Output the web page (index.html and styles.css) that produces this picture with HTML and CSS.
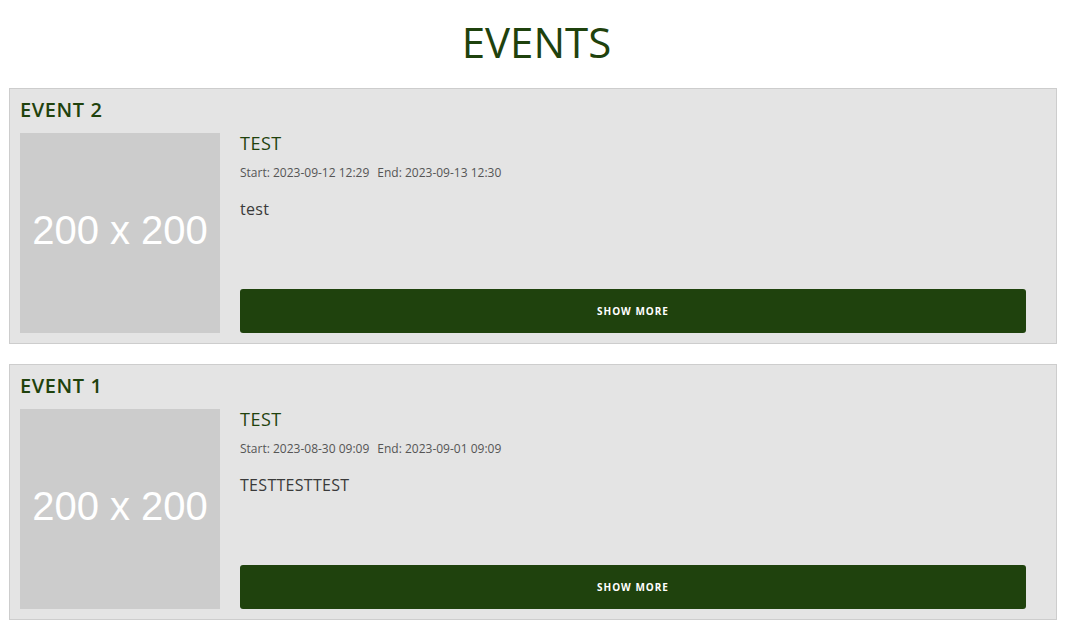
FILE: index.html
```html
<!DOCTYPE html>
<html>
<head>
<meta charset="utf-8">
<link rel="stylesheet" href="styles.css">
</head>
<body>
<h1 class="page-title">EVENTS</h1>
<div class="events">
  <div class="event-card">
    <h2 class="event-name">EVENT 2</h2>
    <div class="event-body">
      <div class="placeholder">200 x 200</div>
      <div class="event-info">
        <h3 class="event-title">TEST</h3>
        <div class="event-dates"><span>Start: 2023-09-12 12:29</span><span>End: 2023-09-13 12:30</span></div>
        <p class="event-desc">test</p>
        <button class="show-more">SHOW MORE</button>
      </div>
    </div>
  </div>
  <div class="event-card">
    <h2 class="event-name">EVENT 1</h2>
    <div class="event-body">
      <div class="placeholder">200 x 200</div>
      <div class="event-info">
        <h3 class="event-title">TEST</h3>
        <div class="event-dates"><span>Start: 2023-08-30 09:09</span><span>End: 2023-09-01 09:09</span></div>
        <p class="event-desc">TESTTESTTEST</p>
        <button class="show-more">SHOW MORE</button>
      </div>
    </div>
  </div>
</div>
</body>
</html>
```
FILE: styles.css
```css
body {
  margin: 0;
  background: #fff;
  font-family: "Open Sans", "Noto Sans", sans-serif;
}
.page-title {
  margin: 0;
  padding-top: 17px;
  height: 88px;
  box-sizing: border-box;
  text-align: center;
  font-size: 42px;
  font-weight: 400;
  line-height: 50px;
  color: #1f420d;
}
.events {
  margin: 0 16px 0 9px;
  display: flex;
  flex-direction: column;
  gap: 20px;
}
.event-card {
  background: #e4e4e4;
  border: 1px solid #cdcdcd;
  padding: 10px 30px 10px 10px;
}
.event-name {
  margin: 0;
  height: 34px;
  font-size: 20px;
  font-weight: 600;
  line-height: 22px;
  letter-spacing: 0.6px;
  color: #1f420d;
}
.event-body {
  display: flex;
  gap: 20px;
}
.placeholder {
  width: 200px;
  height: 200px;
  box-sizing: border-box;
  padding-bottom: 6px;
  flex: none;
  background: #cccccc;
  color: #fff;
  font-family: "Liberation Sans", Arial, sans-serif;
  font-size: 40px;
  display: flex;
  align-items: center;
  justify-content: center;
}
.event-info {
  flex: 1;
  display: flex;
  flex-direction: column;
}
.event-title {
  margin: 0;
  font-size: 18px;
  font-weight: 500;
  line-height: 20px;
  letter-spacing: 0.5px;
  color: #1f420d;
}
.event-dates {
  margin-top: 11px;
  font-size: 12px;
  color: #555;
  display: flex;
  gap: 8px;
}
.event-desc {
  margin: 17px 0 0;
  font-size: 16px;
  line-height: 22px;
  letter-spacing: 0.3px;
  color: #3a3a3a;
}
.show-more {
  margin-top: auto;
  height: 44px;
  border: none;
  border-radius: 3px;
  background: #1f420d;
  color: #fff;
  font-family: inherit;
  font-size: 10px;
  font-weight: 700;
  letter-spacing: 1px;
}
```
